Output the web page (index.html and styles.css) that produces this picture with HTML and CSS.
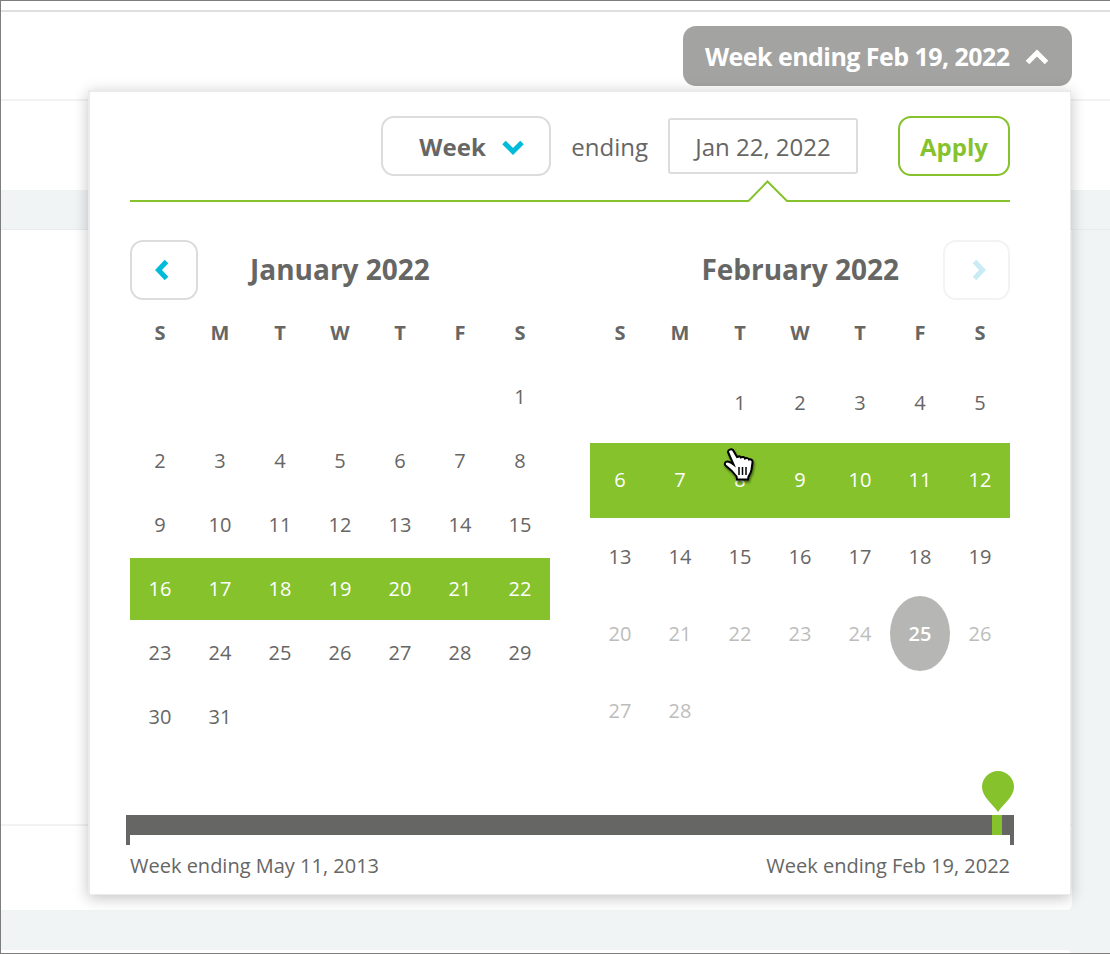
FILE: index.html
```html
<!DOCTYPE html>
<html lang="en">
<head>
<meta charset="utf-8">
<title>Week picker</title>
<link rel="stylesheet" href="styles.css">
</head>
<body>
<div class="app">
  <div class="strip"></div>
  <header class="head">
    <button class="pill">Week ending Feb 19, 2022
      <svg class="pill-chev" viewBox="0 0 24 16"><path d="M2.500 13.500 12 4l9.500 9.500" /></svg>
    </button>
  </header>
  <div class="sub"></div>
  <div class="band"></div>
  <div class="card"><div class="card-line"></div></div>
  <div class="card2"></div>

  <section class="pop">
    <div class="controls">
      <div class="select">Week
        <svg class="sel-chev" viewBox="0 0 24 16"><path d="M3 3.500 12 12.500 21 3.500" /></svg>
      </div>
      <span class="ending">ending</span>
      <div class="date">Jan 22, 2022</div>
      <button class="apply">Apply</button>
    </div>
    <svg class="rule" viewBox="0 0 880 22" preserveAspectRatio="none"><path d="M0 21H618.500L637.500 1.500 657 21H880" /></svg>

    <div class="months">
      <div class="month">
        <div class="mhead">
          <button class="nav prev"><svg viewBox="0 0 16 24"><path d="M12.500 3.500 4.500 12l8 8.500" /></svg></button>
          <h2 class="title">January 2022</h2>
        </div>
        <div class="grid dow"><b>S</b><b>M</b><b>T</b><b>W</b><b>T</b><b>F</b><b>S</b></div>
        <div class="grid jan">
          <span></span><span></span><span></span><span></span><span></span><span></span><span>1</span>
          <span>2</span><span>3</span><span>4</span><span>5</span><span>6</span><span>7</span><span>8</span>
          <span>9</span><span>10</span><span>11</span><span>12</span><span>13</span><span>14</span><span>15</span>
          <span class="sel">16</span><span class="sel">17</span><span class="sel">18</span><span class="sel">19</span><span class="sel">20</span><span class="sel">21</span><span class="sel">22</span>
          <span>23</span><span>24</span><span>25</span><span>26</span><span>27</span><span>28</span><span>29</span>
          <span>30</span><span>31</span>
        </div>
      </div>
      <div class="month">
        <div class="mhead right">
          <h2 class="title">February 2022</h2>
          <button class="nav off"><svg viewBox="0 0 16 24"><path d="M3.500 3.500 11.500 12l-8 8.500" /></svg></button>
        </div>
        <div class="grid dow"><b>S</b><b>M</b><b>T</b><b>W</b><b>T</b><b>F</b><b>S</b></div>
        <div class="grid feb">
          <span></span><span></span><span>1</span><span>2</span><span>3</span><span>4</span><span>5</span>
          <span class="sel">6</span><span class="sel">7</span><span class="sel">8</span><span class="sel">9</span><span class="sel">10</span><span class="sel">11</span><span class="sel">12</span>
          <span>13</span><span>14</span><span>15</span><span>16</span><span>17</span><span>18</span><span>19</span>
          <span class="dim">20</span><span class="dim">21</span><span class="dim">22</span><span class="dim">23</span><span class="dim">24</span><span class="today">25</span><span class="dim">26</span>
          <span class="dim">27</span><span class="dim">28</span>
        </div>
      </div>
    </div>

    <div class="slider">
      <svg class="pin" viewBox="0 0 32 41"><path d="M16 41C11 33 0 26 0 16a16 16 0 0 1 32 0C32 26 21 33 16 41Z" /></svg>
      <div class="track"><i class="thumb"></i></div>
      <div class="labels"><span>Week ending May 11, 2013</span><span>Week ending Feb 19, 2022</span></div>
    </div>

    <svg class="cursor" viewBox="0 0 34 36">
      <path class="c-out" d="M6 5c0-2 3-3.500 5-2l4 7c2-1 3.500-.5 4 .5 1.500-1 3.500-.5 4 1 1.500-.8 3.500-.5 4 1 2-.5 4 .5 3.500 3l-1 7c-.3 3-1.500 4.500-3 7l-.5 3H15l-.5-3c-2-3-7-8-11-11-1.500-1.500-.5-4 2-4 2 0 4 1.500 6 3L6 5Z"/>
      <path class="c-in" d="M17 20v8M20.500 20v8M24 20v8"/>
    </svg>
  </section>
</div>
</body>
</html>
```
FILE: styles.css
```css
* { box-sizing: border-box; }
html, body { margin: 0; padding: 0; }
body { font-family: "Open Sans", "Liberation Sans", sans-serif; color: #666665; }

.app {
  position: relative;
  width: 1110px;
  height: 954px;
  overflow: hidden;
  background: #f0f4f5;
  border-top: 1px solid #7d7d7d;
  border-bottom: 1px solid #7d7d7d;
  border-left: 1px solid #7d7d7d;
}
.strip { height: 9px; background: #fff; }
.head {
  height: 91px;
  padding-top: 14px;
  padding-right: 38px;
  display: flex;
  justify-content: flex-end;
  align-items: flex-start;
  background: #fff;
  border-top: 2px solid #dfdfdf;
  border-bottom: 2px solid #f2f2f2;
}
.pill {
  width: 389px;
  height: 60px;
  padding: 0 0 0 22px;
  display: flex;
  align-items: center;
  border: 0;
  border-radius: 13px;
  background: #a3a3a1;
  color: #fff;
  font: 700 25px "Open Sans", sans-serif;
  letter-spacing: -0.55px;
  white-space: nowrap;
}
.pill-chev { width: 24px; height: 16px; margin: 2px 0 0 16px; fill: none; stroke: #fff; stroke-width: 5; }
.sub { height: 89px; background: #fff; }
.band { height: 40px; background: #f0f4f5; border-bottom: 1px solid #e9eced; }
.card {
  width: 1071px;
  height: 680px;
  padding-top: 594px;
  background: #fff;
  border-radius: 0 0 6px 0;
}
.card-line { height: 2px; background: #f2f2f2; }
.card2 {
  width: 1071px;
  height: 10px;
  margin-top: 40px;
  background: #fff;
  border-radius: 0 6px 0 0;
}

.pop {
  position: absolute;
  left: 87px;
  top: 89px;
  width: 983px;
  height: 805px;
  padding: 24px 60px 0 40px;
  background: #fff;
  border: 2px solid #ebebeb;
  border-right-width: 1px;
  border-bottom-width: 1px;
  box-shadow: 0 3px 14px rgba(0, 0, 0, .24);
}
.controls { display: flex; align-items: center; justify-content: flex-end; height: 60px; }
.select {
  width: 170px;
  height: 60px;
  padding-left: 36px;
  display: flex;
  align-items: center;
  border: 2px solid #dcdcdc;
  border-radius: 13px;
  font-weight: 700;
  font-size: 24px;
}
.sel-chev { width: 24px; height: 16px; margin: 2px 0 0 15px; fill: none; stroke: #00bcd8; stroke-width: 5; }
.ending { margin-left: 20px; font-size: 24px; }
.date {
  width: 190px;
  height: 56px;
  margin-left: 20px;
  display: flex;
  align-items: center;
  justify-content: center;
  border: 2px solid #dcdcdc;
  border-radius: 3px;
  font-size: 24px;
}
.apply {
  width: 112px;
  height: 60px;
  margin-left: 40px;
  padding: 0;
  border: 2px solid #85c22c;
  border-radius: 13px;
  background: #fff;
  color: #85c22c;
  font: 700 24px "Open Sans", sans-serif;
}
.rule { display: block; width: 880px; height: 22px; margin-top: 4px; overflow: visible; fill: none; stroke: #85c22c; stroke-width: 2; }

.months { display: flex; justify-content: space-between; margin-top: 38px; }
.month { width: 420px; }
.mhead { display: flex; align-items: center; height: 60px; }
.mhead.right { justify-content: flex-end; }
.nav {
  width: 68px;
  height: 60px;
  padding: 0;
  display: flex;
  align-items: center;
  justify-content: center;
  border: 2px solid #dcdcdc;
  border-radius: 13px;
  background: #fff;
}
.nav svg { width: 16px; height: 24px; fill: none; stroke: #00bcd8; stroke-width: 5; }
.nav.prev { padding-right: 5px; }
.nav.off { width: 67px; padding-left: 5px; border-color: #f3f3f3; margin-left: 44px; }
.nav.off svg { stroke: #c9ebf3; }
.title { margin: -2px 0 0 52px; font-size: 28px; font-weight: 700; white-space: nowrap; }
.mhead.right .title { margin: -2px 0 0; }

.grid { display: grid; grid-template-columns: repeat(7, 60px); text-align: center; font-size: 20px; }
.grid span { display: flex; align-items: center; justify-content: center; }
.dow { height: 28px; margin-top: 18px; align-items: center; }
.dow b { font-size: 20px; font-weight: 700; }
.jan { margin-top: 18px; grid-auto-rows: 64px; }
.grid .sel { margin-top: 2px; padding-bottom: 2px; background: #85c22c; color: #fff; }
.jan .sel { height: 62px; }
.feb { margin-top: 18px; grid-auto-rows: 77px; }
.feb .sel { height: 75px; }
.dim { color: #bdbdbb; }
.today { height: 75px; align-self: center; border-radius: 50%; background: #b6b6b4; color: #fff; font-weight: 600; }

.slider { position: absolute; left: 36px; right: 56px; top: 723px; }
.pin { position: absolute; right: 0; top: -44px; width: 32px; height: 41px; fill: #85c22c; }
.track { position: relative; height: 20px; background: #666665; }
.track::before, .track::after { content: ""; position: absolute; top: 20px; width: 4px; height: 10px; background: #666665; }
.track::before { left: 0; }
.track::after { right: 0; }
.thumb { position: absolute; left: 866px; top: 0; width: 10px; height: 20px; background: #85c22c; }
.labels { display: flex; justify-content: space-between; margin: 18px 4px 0; font-size: 20px; line-height: 26px; }

.cursor { position: absolute; left: 632px; top: 355px; width: 34px; height: 36px; filter: drop-shadow(1px 2px 1px rgba(0,0,0,.5)); }
.c-out { fill: #fff; stroke: #000; stroke-width: 2; }
.c-in { fill: none; stroke: #000; stroke-width: 1.500; }
```
